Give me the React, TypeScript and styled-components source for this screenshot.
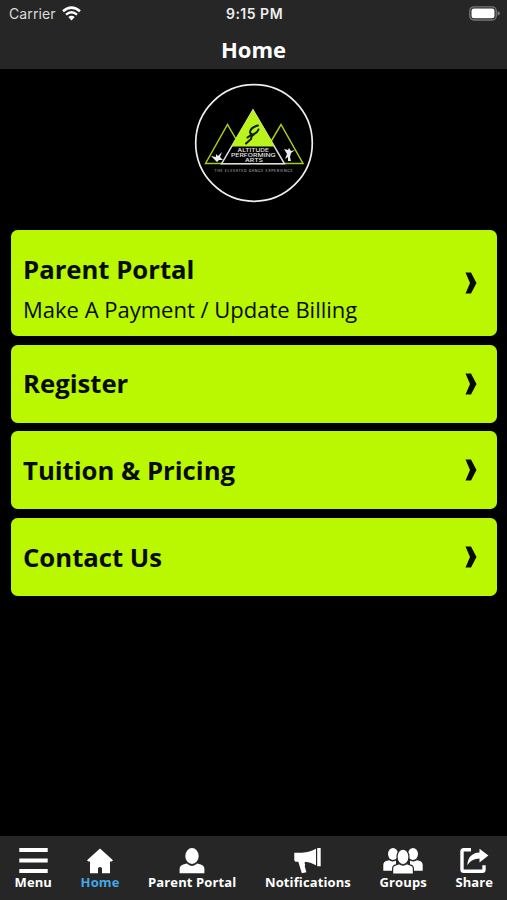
import React from 'react';
import styled, { createGlobalStyle } from 'styled-components';

const Global = createGlobalStyle`
  * { box-sizing: border-box; }
  html, body { margin: 0; padding: 0; background: #000; }
  body { font-family: "Open Sans", sans-serif; }
`;

const Screen = styled.div`
  width: 507px;
  height: 900px;
  display: flex;
  flex-direction: column;
  background: #000;
  overflow: hidden;
`;

const Header = styled.header`
  height: 68.5px;
  flex: none;
  background: #262626;
  color: #fff;
`;

const StatusBar = styled.div`
  height: 27.4px;
  display: grid;
  grid-template-columns: 1fr auto 1fr;
  align-items: center;
  padding: 0 7px 0 9px;
  font: 400 14px/27px Inter, sans-serif;
`;

const Carrier = styled.div`
  display: flex;
  align-items: center;
  gap: 6px;
  color: #dcdcdc;
  letter-spacing: 0.1px;
`;

const Time = styled.time`
  font-weight: 600;
  font-size: 14px;
  letter-spacing: 0.5px;
  color: #eee;
`;

const BatterySlot = styled.div`
  display: flex;
  justify-content: flex-end;
`;

const Title = styled.h1`
  margin: 0;
  text-align: center;
  font-size: 22px;
  line-height: 45px;
  font-weight: 700;
`;

const LogoArea = styled.div`
  flex: none;
  height: 161px;
  padding-top: 14.7px;
  display: flex;
  justify-content: center;
  align-items: flex-start;
`;

const Icon = styled.svg`
  display: block;
  flex: none;
`;

const CardList = styled.main`
  flex: 1;
  display: flex;
  flex-direction: column;
  gap: 8.7px;
  padding: 0.3px 10.5px 0 11px;
`;

const Card = styled.a<{ $tall?: boolean }>`
  height: ${(p) => (p.$tall ? 106.2 : 78)}px;
  flex: none;
  display: flex;
  align-items: center;
  justify-content: space-between;
  padding: 0 20px 0 12px;
  border-radius: 6.5px;
  background: #b9f800;
  color: #080c00;
`;

const CardText = styled.div<{ $tall?: boolean }>`
  padding-top: ${(p) => (p.$tall ? 13 : 1.4)}px;
`;

const CardTitle = styled.div`
  font-size: 25.7px;
  line-height: 36px;
  font-weight: 700;
`;

const CardSubtitle = styled.div`
  margin-top: 3.4px;
  font-size: 22px;
  line-height: 36px;
  white-space: nowrap;
`;

const TabBar = styled.nav`
  flex: none;
  height: 64px;
  display: flex;
  justify-content: space-between;
  padding: 12px 13.8px 0 14.5px;
  background: #262626;
`;

const Tab = styled.a<{ $active?: boolean }>`
  display: flex;
  flex-direction: column;
  align-items: center;
  color: ${(p) => (p.$active ? '#43a7e8' : '#fff')};
  font-size: 13px;
  line-height: 17px;
  letter-spacing: 0.12px;
  font-weight: 700;
  white-space: nowrap;
`;

const Chevron = () => (
  <Icon width="12" height="22" viewBox="0 0 12 22" fill="#080c00">
    <path d="M0.5 0.5H6L11.5 11L6 21.5H0.5L5 11Z" />
  </Icon>
);

const Wifi = () => (
  <Icon width="19" height="15" viewBox="0 0 19 15" fill="none" stroke="#fff">
    <path d="M1 5.2Q9.5-2 18 5.2" strokeWidth="2.5" />
    <path d="M4 8.6Q9.5 4 15 8.6" strokeWidth="2.4" />
    <path d="M6.3 11Q9.5 8.5 12.7 11L9.5 14.4Z" fill="#fff" stroke="none" />
  </Icon>
);

const Battery = () => (
  <Icon width="31" height="15" viewBox="0 0 31 15">
    <rect x="0.8" y="0.8" width="26.4" height="13.2" rx="4" fill="none" stroke="#777" strokeWidth="1.3" />
    <rect x="2.5" y="2.5" width="23" height="9.8" rx="2.3" fill="#fff" />
    <path d="M28.5 5Q31 6 31 7.4T28.5 9.8Z" fill="#777" />
  </Icon>
);

const Logo = () => (
  <Icon width="120" height="120" viewBox="0 0 120 120">
    <circle cx="60" cy="60" r="58.3" fill="none" stroke="#eee" strokeWidth="1.7" />
    <g fill="#000" stroke="#a5cf16" strokeWidth="1.5">
      <path d="M11.5 80.5L33.5 41.5L56 80.5Z" />
      <path d="M64 80.5L87 41.5L109 80.5Z" />
    </g>
    <path d="M27.5 80.8L59 27L90.5 80.8Z" fill="#000" stroke="#ddd" strokeWidth="1.5" />
    <path d="M59 26.5L81 63.5H37Z" fill="#b9f41d" />
    <path d="M64 42.5Q56.5 44.5 56 49Q56.5 52 60 51Q63.5 49.5 64.5 46.5M60 51.5Q57.5 52 57 56L52 60.5M57 52L53.5 54.5" fill="none" stroke="#111c00" strokeWidth="2" strokeLinecap="round" />
    <path d="M17 73L22 74L22 71L24 73L28 69L26 74L29 77L25 77L23 79L20 76Z" fill="#eee" />
    <path d="M90 66L94 67L95 65L97 68L101 67L97 70L96 74L97 78H94L94 74L91 76L93 71Z" fill="#eee" />
    <g fill="#e8e8e8" fontFamily="Inter, sans-serif" fontWeight="500">
      <text transform="translate(43.5 69.2) scale(1.5 1)" fontSize="4.8" textLength="21" lengthAdjust="spacingAndGlyphs">ALTITUDE</text>
      <text transform="translate(37 74.3) scale(1.5 1)" fontSize="4.8" textLength="29.8" lengthAdjust="spacingAndGlyphs">PERFORMING</text>
      <text transform="translate(51 79.2) scale(1.5 1)" fontSize="4.8" textLength="12" lengthAdjust="spacingAndGlyphs">ARTS</text>
      <text x="20.5" y="88.6" fontSize="3.5" fill="#aaa" textLength="78">THE ELEVATED DANCE EXPERIENCE</text>
    </g>
  </Icon>
);

const MenuIcon = () => (
  <Icon width="29" height="26" viewBox="0 0 29 26" fill="#fff">
    <path d="M0.3 0H28.7V4H0.3ZM0.3 10.5H28.7V14.5H0.3ZM0.3 21H28.7V25H0.3Z" />
  </Icon>
);

const HomeIcon = () => (
  <Icon width="26" height="26" viewBox="0 0 26 26" fill="#fff">
    <path d="M13 0.5L26 12.2L24.7 13.6H23V25.2H15V20.5Q15 19 13 19T11 20.5V25.2H3V13.6H1.3L0 12.2Z" />
  </Icon>
);

const PersonIcon = () => (
  <Icon width="26" height="26" viewBox="0 0 26 26" fill="#fff">
    <ellipse cx="13" cy="8" rx="6.7" ry="7.9" />
    <path d="M0.6 25.2V21Q0.6 17.3 5 16.2L8 15.6Q10 18 13 18T18 15.6L21 16.2Q25.4 17.3 25.4 21V25.2Z" />
  </Icon>
);

const MegaphoneIcon = () => (
  <Icon width="27" height="26" viewBox="0 0 27 26" fill="#fff">
    <path d="M23.2 0H26.7V18.3H23.2ZM0.3 4.8H8Q16 4.3 22 0.8V17.2Q16 14.2 11.5 13.8L10.5 14.8L11.2 17L10.7 18.2L12.4 24.2L7.8 25.2L4.3 13.8H2Q0.3 13.8 0.3 11.8Z" />
  </Icon>
);

const GroupsIcon = () => (
  <Icon width="40" height="26" viewBox="0 0 40 26" fill="#fff">
    <ellipse cx="10" cy="6" rx="5" ry="6" />
    <ellipse cx="30" cy="6" rx="5" ry="6" />
    <path d="M0.3 22.7V17Q0.3 13.5 4 12.7L6 12.3Q9 14.5 13 12.5V22.7ZM39.7 22.7V17Q39.7 13.5 36 12.7L34 12.3Q31 14.5 27 12.5V22.7Z" />
    <path d="M9.6 26V20.5Q9.6 17.5 13 16.8L16 15.6Q20 18.5 24 15.6L27 16.8Q30.4 17.5 30.4 20.5V26Z" stroke="#262626" strokeWidth="1.2" />
    <ellipse cx="20" cy="8.8" rx="6" ry="7.7" stroke="#262626" strokeWidth="1.2" />
  </Icon>
);

const ShareIcon = () => (
  <Icon width="29" height="26" viewBox="0 0 29 26" fill="#fff">
    <path d="M11 1.8H3.8Q2 1.8 2 3.6V21.5Q2 23.3 3.8 23.3H22.2Q24 23.3 24 21.5V17.2" fill="none" stroke="#fff" strokeWidth="3.4" />
    <path d="M19.5 0.8L28.4 7.5L19.5 14.5V10.6Q11.5 10.6 7.3 17.2Q8 5.3 19.5 4.5Z" />
  </Icon>
);

const cards = [
  { title: 'Parent Portal', subtitle: 'Make A Payment / Update Billing' },
  { title: 'Register' },
  { title: 'Tuition & Pricing' },
  { title: 'Contact Us' },
];

const tabs = [
  { label: 'Menu', Glyph: MenuIcon },
  { label: 'Home', Glyph: HomeIcon, active: true },
  { label: 'Parent Portal', Glyph: PersonIcon },
  { label: 'Notifications', Glyph: MegaphoneIcon },
  { label: 'Groups', Glyph: GroupsIcon },
  { label: 'Share', Glyph: ShareIcon },
];

export default function App() {
  return (
    <Screen>
      <Global />
      <Header>
        <StatusBar>
          <Carrier>Carrier <Wifi /></Carrier>
          <Time>9:15 PM</Time>
          <BatterySlot><Battery /></BatterySlot>
        </StatusBar>
        <Title>Home</Title>
      </Header>
      <LogoArea><Logo /></LogoArea>
      <CardList>
        {cards.map(({ title, subtitle }) => (
          <Card key={title} $tall={!!subtitle}>
            <CardText $tall={!!subtitle}>
              <CardTitle>{title}</CardTitle>
              {subtitle && <CardSubtitle>{subtitle}</CardSubtitle>}
            </CardText>
            <Chevron />
          </Card>
        ))}
      </CardList>
      <TabBar>
        {tabs.map(({ label, Glyph, active }) => (
          <Tab key={label} $active={active}>
            <Glyph />
            {label}
          </Tab>
        ))}
      </TabBar>
    </Screen>
  );
}
